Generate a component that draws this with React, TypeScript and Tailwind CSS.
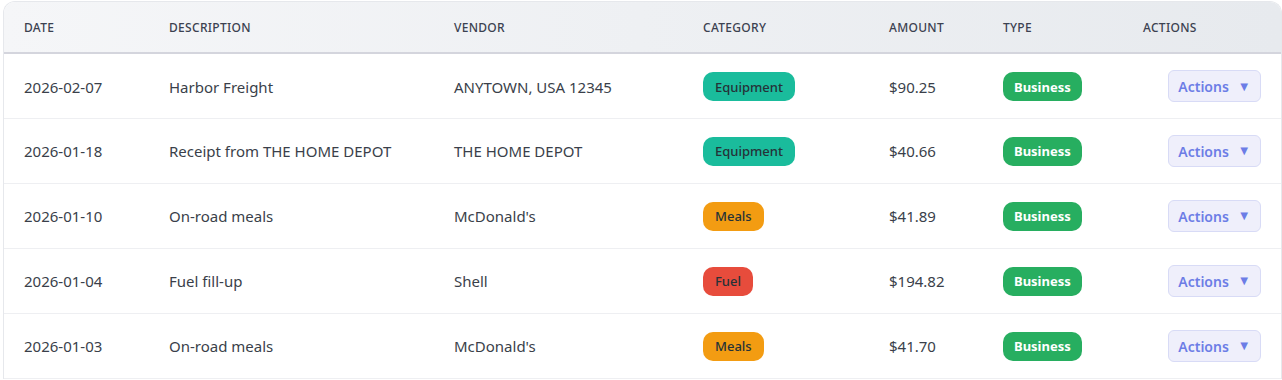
import React from "react";

type Row = {
  date: string;
  desc: string;
  vendor: string;
  cat: "Equipment" | "Meals" | "Fuel";
  amount: string;
};

const rows: Row[] = [
  { date: "2026-02-07", desc: "Harbor Freight", vendor: "ANYTOWN, USA 12345", cat: "Equipment", amount: "$90.25" },
  { date: "2026-01-18", desc: "Receipt from THE HOME DEPOT", vendor: "THE HOME DEPOT", cat: "Equipment", amount: "$40.66" },
  { date: "2026-01-10", desc: "On-road meals", vendor: "McDonald's", cat: "Meals", amount: "$41.89" },
  { date: "2026-01-04", desc: "Fuel fill-up", vendor: "Shell", cat: "Fuel", amount: "$194.82" },
  { date: "2026-01-03", desc: "On-road meals", vendor: "McDonald's", cat: "Meals", amount: "$41.70" },
];

function CatBadge({ cat }: { cat: Row["cat"] }) {
  const cls =
    cat === "Equipment"
      ? "bg-[#1abc9c]"
      : cat === "Meals"
      ? "bg-[#f39c12]"
      : "bg-[#e74c3c]";
  return (
    <span
      className={`inline-flex h-[29px] items-center rounded-[10px] px-[12px] pt-[1px] text-[13px] font-medium text-[#253238] ${cls}`}
    >
      {cat}
    </span>
  );
}

export default function App() {
  const headers = ["Date", "Description", "Vendor", "Category", "Amount", "Type", "Actions"];
  return (
    <div
      className="bg-white pl-[3px] pt-[1px]"
      style={{ fontFamily: '"Noto Sans", "Open Sans", sans-serif' }}
    >
      <div className="overflow-hidden rounded-t-[12px] border border-b-0 border-[#e6e8ec] bg-white">
        <table className="w-full table-fixed border-collapse">
          <colgroup>
            <col className="w-[145px]" />
            <col className="w-[285px]" />
            <col className="w-[249px]" />
            <col className="w-[186px]" />
            <col className="w-[114px]" />
            <col className="w-[140px]" />
            <col />
          </colgroup>
          <thead>
            <tr className="h-[51px] border-b-2 border-[#d4d5dd] bg-gradient-to-r from-[#f5f6f8] to-[#e7eaee]">
              {headers.map((h) => (
                <th
                  key={h}
                  className="pl-[20px] pt-[2px] text-left text-[12px] font-medium uppercase tracking-[0.3px] text-[#3b4150]"
                >
                  {h}
                </th>
              ))}
            </tr>
          </thead>
          <tbody>
            {rows.map((r, i) => (
              <tr key={i} className="h-[65px] border-b border-[#eeeff2] text-[15px] text-[#3a3f4a]">
                <td className="pl-[20px] pt-[2px]">{r.date}</td>
                <td className="pl-[20px] pt-[2px]">{r.desc}</td>
                <td className="pl-[20px] pt-[2px]">{r.vendor}</td>
                <td className="pl-[20px] pt-[2px]">
                  <CatBadge cat={r.cat} />
                </td>
                <td className="pl-[20px] pt-[2px]">{r.amount}</td>
                <td className="pl-[20px] pt-[2px]">
                  <span className="inline-flex h-[29px] items-center rounded-[10px] bg-[#27ae60] px-[11px] pt-[1px] text-[13px] font-bold text-white">
                    Business
                  </span>
                </td>
                <td className="pr-[20px] pt-[1px] text-right">
                  <button className="inline-flex h-[32px] w-[93px] items-center justify-center gap-[9px] rounded-[6px] border border-[#d8dbf6] bg-[#efeffb] text-[14px] font-semibold text-[#6c7de6]">
                    Actions
                    <span className="text-[13px]">▼</span>
                  </button>
                </td>
              </tr>
            ))}
          </tbody>
        </table>
      </div>
    </div>
  );
}
